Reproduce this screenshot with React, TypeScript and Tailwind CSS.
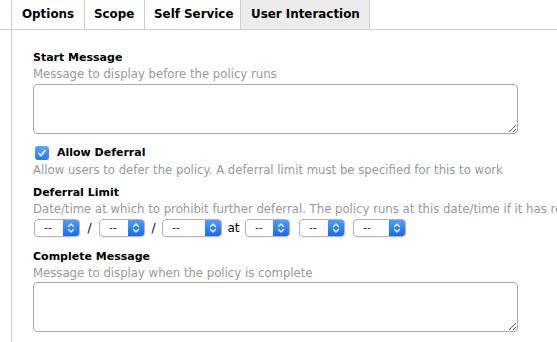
import React from 'react';

const tabs = ['Options', 'Scope', 'Self Service', 'User Interaction'];

function Select({ width }: { width: string }) {
  return (
    <div className={`flex h-[18px] ${width} rounded-[4px] border border-[#b5b5b5] bg-white overflow-hidden shadow-[0_1px_0_rgba(0,0,0,0.05)]`}>
      <div className="flex-1 pl-[9px] text-[11px] leading-[16px] text-[#222]">--</div>
      <div className="w-[16px] flex items-center justify-center bg-gradient-to-b from-[#4f9cfb] to-[#1369f3]">
        <svg width="8" height="12" viewBox="0 0 8 12" fill="none" stroke="white" strokeWidth="1.4" strokeLinecap="round" strokeLinejoin="round">
          <path d="M1.5 4.5 L4 2 L6.5 4.5" />
          <path d="M1.5 7.5 L4 10 L6.5 7.5" />
        </svg>
      </div>
    </div>
  );
}

function Label({ children }: { children: React.ReactNode }) {
  return <div className="text-[11px] font-bold leading-[16px] text-black">{children}</div>;
}

function Hint({ children }: { children: React.ReactNode }) {
  return <div className="text-[11.7px] leading-[16px] text-[#999] whitespace-nowrap">{children}</div>;
}

export default function App() {
  return (
    <div className="w-[557px] h-[342px] bg-white overflow-hidden font-['DejaVu_Sans',sans-serif]">
      {/* Tabs */}
      <div className="flex h-[30px] border-b border-[#cfcfcf]">
        <div className="w-[11px] shrink-0" />
        {tabs.map((t, i) => (
          <div
            key={t}
            className={`flex items-center border-l border-[#cfcfcf] text-[11.9px] font-bold text-black ${
              i === 0 ? 'w-[73px] pl-[10px]' : i === 1 ? 'w-[60px] pl-[9px]' : i === 2 ? 'w-[96px] pl-[9px]' : 'w-[130px] pl-[10px] bg-[#ececec] border-r'
            }`}
          >
            {t}
          </div>
        ))}
      </div>

      {/* Panel */}
      <div className="ml-[11px] h-[312px] border-l border-[#cfcfcf] pl-[21px] pt-[20px]">
        <Label>Start Message</Label>
        <Hint>Message to display before the policy runs</Hint>
        <textarea className="mt-[2px] block w-[485px] h-[50px] rounded-[4px] border border-[#aaa] resize" />

        <div className="mt-[11px] flex items-center gap-[8px] pl-[2px]">
          <div className="w-[14px] h-[14px] rounded-[3px] bg-gradient-to-b from-[#5ea5fb] to-[#2a78f2] flex items-center justify-center">
            <svg width="10" height="10" viewBox="0 0 10 10" fill="none" stroke="white" strokeWidth="1.5" strokeLinecap="round" strokeLinejoin="round">
              <path d="M2 5.5 L4 7.8 L8 2.5" />
            </svg>
          </div>
          <Label>Allow Deferral</Label>
        </div>
        <div className="mt-[1px]">
          <Hint>Allow users to defer the policy. A deferral limit must be specified for this to work</Hint>
        </div>

        <div className="mt-[7px]">
          <Label>Deferral Limit</Label>
        </div>
        <Hint>Date/time at which to prohibit further deferral. The policy runs at this date/time if it has reached</Hint>
        <div className="mt-[2px] flex items-center pl-[1px] text-[12px] text-black">
          <Select width="w-[46px]" />
          <span className="w-[19px] text-center">/</span>
          <Select width="w-[46px]" />
          <span className="w-[17px] text-center">/</span>
          <Select width="w-[60px]" />
          <span className="w-[23px] text-center">at</span>
          <Select width="w-[45px]" />
          <span className="w-[9px]" />
          <Select width="w-[46px]" />
          <span className="w-[8px]" />
          <Select width="w-[53px]" />
        </div>

        <div className="mt-[12px]">
          <Label>Complete Message</Label>
        </div>
        <Hint>Message to display when the policy is complete</Hint>
        <textarea className="mt-[1px] block w-[485px] h-[50px] rounded-[4px] border border-[#aaa] resize" />
      </div>
    </div>
  );
}
